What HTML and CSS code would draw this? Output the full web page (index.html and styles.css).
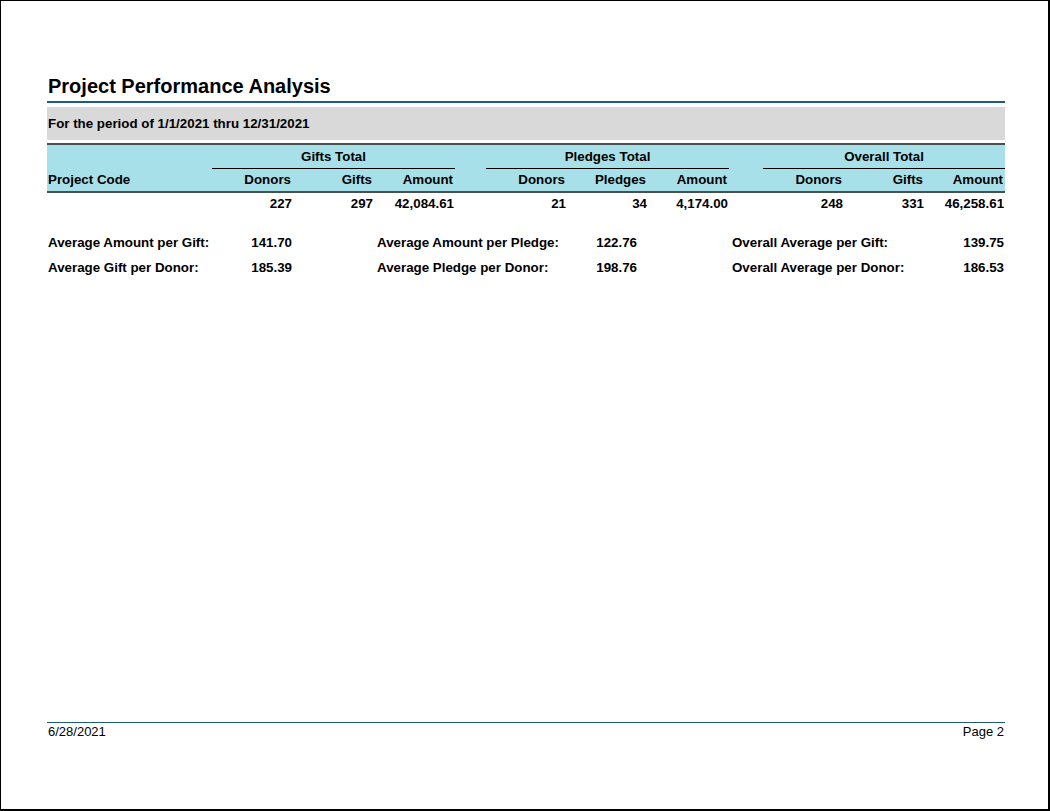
FILE: index.html
```html
<!DOCTYPE html>
<html>
<head>
<meta charset="utf-8">
<title>Project Performance Analysis</title>
<link rel="stylesheet" href="styles.css">
</head>
<body>
<div class="page">
  <h1 class="title">Project Performance Analysis</h1>
  <div class="period">For the period of 1/1/2021 thru 12/31/2021</div>

  <table class="report">
    <colgroup>
      <col class="c-code">
      <col class="c-num"><col class="c-num"><col class="c-num">
      <col class="c-gap1">
      <col class="c-num"><col class="c-num"><col class="c-num">
      <col class="c-gap2">
      <col class="c-num"><col class="c-num"><col class="c-num3">
    </colgroup>
    <thead>
      <tr class="group-row">
        <th rowspan="2" class="code-head">Project Code</th>
        <th colspan="3" class="group">Gifts Total</th>
        <th rowspan="2" class="gap"></th>
        <th colspan="3" class="group">Pledges Total</th>
        <th rowspan="2" class="gap"></th>
        <th colspan="3" class="group">Overall Total</th>
      </tr>
      <tr class="sub-row">
        <th class="sub">Donors</th>
        <th class="sub">Gifts</th>
        <th class="sub">Amount</th>
        <th class="sub">Donors</th>
        <th class="sub">Pledges</th>
        <th class="sub">Amount</th>
        <th class="sub">Donors</th>
        <th class="sub">Gifts</th>
        <th class="sub">Amount</th>
      </tr>
    </thead>
    <tbody>
      <tr class="data-row">
        <td></td>
        <td class="num">227</td>
        <td class="num">297</td>
        <td class="num">42,084.61</td>
        <td></td>
        <td class="num">21</td>
        <td class="num">34</td>
        <td class="num">4,174.00</td>
        <td></td>
        <td class="num">248</td>
        <td class="num">331</td>
        <td class="num">46,258.61</td>
      </tr>
    </tbody>
  </table>

  <div class="averages">
    <div class="lbl">Average Amount per Gift:</div>
    <div class="val">141.70</div>
    <div class="spacer"></div>
    <div class="lbl">Average Amount per Pledge:</div>
    <div class="val">122.76</div>
    <div class="spacer"></div>
    <div class="lbl">Overall Average per Gift:</div>
    <div class="val">139.75</div>

    <div class="lbl">Average Gift per Donor:</div>
    <div class="val">185.39</div>
    <div class="spacer"></div>
    <div class="lbl">Average Pledge per Donor:</div>
    <div class="val">198.76</div>
    <div class="spacer"></div>
    <div class="lbl">Overall Average per Donor:</div>
    <div class="val">186.53</div>
  </div>

  <div class="footer">
    <span class="date">6/28/2021</span>
    <span class="pageno">Page 2</span>
  </div>
</div>
</body>
</html>
```

FILE: styles.css
```css
html, body {
  margin: 0;
  padding: 0;
  overflow: hidden;
  background: #ffffff;
}

body {
  font-family: "Liberation Sans", Arial, sans-serif;
  color: #000000;
}

.page {
  box-sizing: border-box;
  width: 1050px;
  height: 811px;
  border-style: solid;
  border-color: #000000;
  border-width: 1px 2px 2px 1px;
  padding: 74px 43px 69px 46px;
  display: flex;
  flex-direction: column;
}

.title {
  margin: 0;
  font-size: 20px;
  line-height: 23px;
  font-weight: bold;
  padding: 0 0 3px 1px;
  border-bottom: 2px solid #1d5b7f;
}

.period {
  margin-top: 4px;
  height: 33px;
  line-height: 33px;
  background: #d9d9d9;
  font-size: 13.33px;
  font-weight: bold;
  padding-left: 1px;
}

.report {
  margin-top: 3px;
  width: 958px;
  table-layout: fixed;
  border-collapse: separate;
  border-spacing: 0;
  font-size: 13.33px;
}

.c-code { width: 165px; }
.c-num { width: 81px; }
.c-num3 { width: 80px; }
.c-gap1 { width: 31px; }
.c-gap2 { width: 34px; }

.report th {
  padding: 0;
  font-weight: bold;
  background: #a8e0e9;
}

.code-head {
  text-align: left;
  vertical-align: bottom;
  line-height: 22px;
  padding-left: 1px !important;
  border-top: 2px solid #46514f;
  border-bottom: 2px solid #46514f;
}

.gap {
  border-top: 2px solid #46514f;
  border-bottom: 2px solid #46514f;
}

.group {
  height: 23px;
  line-height: 22px;
  text-align: center;
  border-top: 2px solid #46514f;
  border-bottom: 1px solid #000000;
}

.sub {
  height: 22px;
  line-height: 22px;
  text-align: right;
  padding-right: 2px !important;
  border-bottom: 2px solid #46514f;
}

.data-row td {
  height: 22px;
  line-height: 22px;
  padding: 0;
  font-weight: bold;
}

.data-row .num {
  text-align: right;
  padding-right: 1px;
}

.averages {
  margin-top: 15px;
  display: grid;
  grid-template-columns: 153px 93px 83px 184px 78px 93px 189px 85px;
  grid-auto-rows: 25px;
  line-height: 25px;
  font-size: 13.33px;
  font-weight: bold;
}

.averages .lbl {
  padding-left: 1px;
  white-space: nowrap;
}

.averages .val {
  text-align: right;
  padding-right: 1px;
}

.footer {
  margin-top: auto;
  border-top: 1px solid #1d5b7f;
  display: flex;
  justify-content: space-between;
  font-size: 13px;
  line-height: 17px;
  padding: 0 1px;
}
```
